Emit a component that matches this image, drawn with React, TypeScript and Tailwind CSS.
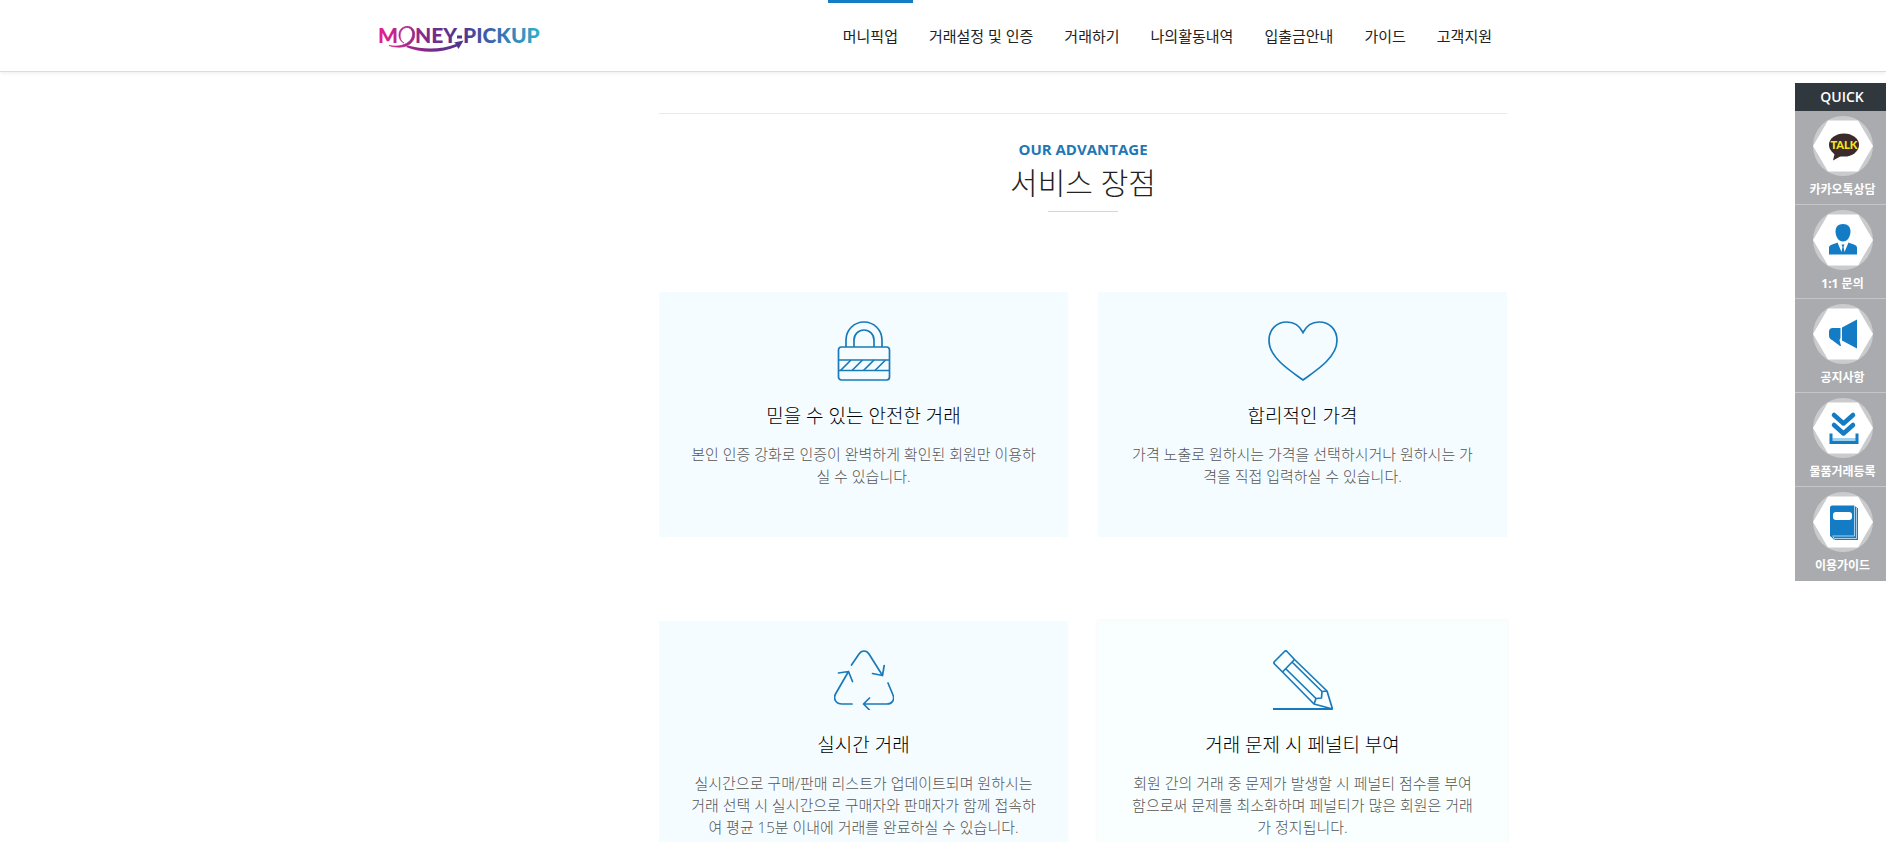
import type { ReactNode } from 'react'

const navItems = ['머니픽업', '거래설정 및 인증', '거래하기', '나의활동내역', '입출금안내', '가이드', '고객지원']

function LockIcon() {
  return (
    <svg viewBox="0 0 60 60" className="h-[60px] w-[60px]" fill="none" stroke="currentColor" strokeWidth="1.7">
      <rect x="4.5" y="26" width="51" height="33" rx="3" />
      <path d="M12 26v-7a18 18 0 0 1 36 0v7M20 26v-7a10 10 0 0 1 20 0v7M4.5 39h51M4.5 49.5h51" />
      <path d="M6.5 49.5L17 39M18 49.5L28.500 39M29.5 49.5L40 39M41 49.5L51.5 39" />
    </svg>
  )
}

function HeartIcon() {
  return (
    <svg viewBox="0 0 70 60" className="h-[60px] w-[70px]" fill="none" stroke="currentColor" strokeWidth="1.7">
      <path d="M35 11.5C31.5 4.500 25.5 1 19 1 8.5 1 1 8.5 1 19.5c0 8.500 4 14.500 11 21.500 6.500 6.500 14 11.500 23 18 9-6.500 16.500-11.500 23-18 7-7 11-13 11-21.500C69 8.500 61.500 1 51 1c-6.500 0-12.500 3.500-16 10.500z" />
    </svg>
  )
}

function RecycleIcon() {
  return (
    <svg viewBox="0 0 60 60" className="h-[60px] w-[60px]" fill="none" stroke="currentColor" strokeWidth="1.7" strokeLinecap="round" strokeLinejoin="round">
      <path d="M17.5 15L25 4c2.500-4 7.500-4 10 0l13.500 21.500M38.500 23.500l10 2 1.700-10" />
      <path d="M54 33l5 12c2 4.500-1 9-6 9H29.500M35.500 48l-6 6 6 6" />
      <path d="M18 54H8c-6 0-9-5-6.500-10L14.500 21.500M4.500 23l10-1.500 4 10" />
    </svg>
  )
}

function PencilIcon() {
  return (
    <svg viewBox="0 0 60 60" className="h-[60px] w-[60px]" fill="none" stroke="currentColor" strokeWidth="1.7" strokeLinejoin="round">
      <path d="M11.5 1.500L1.500 11.500c-.8.8-.8 1.700 0 2.500L9.500 22 41 54l18.500 5L54 41 21.500 9.500 14 1.500c-.8-.8-1.700-.8-2.500 0z" />
      <path d="M9.5 22l12-12.500M12.500 18.500L43 48.500M19 12l30 29.500M41 54l2-5.500 5.500-.5.500-6.500 5-.5" />
      <path d="M0 59h59.500" strokeWidth="2" />
    </svg>
  )
}

const cards = [
  {
    title: '믿을 수 있는 안전한 거래',
    text: '본인 인증 강화로 인증이 완벽하게 확인된 회원만 이용하실 수 있습니다.',
    icon: <LockIcon />,
  },
  {
    title: '합리적인 가격',
    text: '가격 노출로 원하시는 가격을 선택하시거나 원하시는 가격을 직접 입력하실 수 있습니다.',
    icon: <HeartIcon />,
  },
  {
    title: '실시간 거래',
    text: '실시간으로 구매/판매 리스트가 업데이트되며 원하시는 거래 선택 시 실시간으로 구매자와 판매자가 함께 접속하여 평균 15분 이내에 거래를 완료하실 수 있습니다.',
    icon: <RecycleIcon />,
  },
  {
    title: '거래 문제 시 페널티 부여',
    text: '회원 간의 거래 중 문제가 발생할 시 페널티 점수를 부여함으로써 문제를 최소화하며 페널티가 많은 회원은 거래가 정지됩니다.',
    icon: <PencilIcon />,
    active: true,
  },
]

// Every quick icon is drawn on the same 60px disc with a white hexagon
function QuickDisc({ children }: { children: ReactNode }) {
  return (
    <svg viewBox="0 0 60 60" className="h-[60px] w-[60px]">
      <circle cx="30" cy="30" r="30" fill="#cacbcd" />
      <path d="M15 4.500h30L60 30 45 55.500H15L0 30z" fill="#fff" />
      {children}
    </svg>
  )
}

const quickItems = [
  {
    label: '카카오톡상담',
    icon: (
      <>
        <ellipse cx="31" cy="29" rx="15" ry="11.5" fill="#3b2a2b" />
        <path d="M22 36l-2 8.500 9-5z" fill="#3b2a2b" />
        <text x="31" y="33" textAnchor="middle" fontSize="11" fontWeight="900" fontFamily="Lato, sans-serif" fill="#f7e51d">TALK</text>
      </>
    ),
  },
  {
    label: '1:1 문의',
    icon: (
      <g fill="#147cc4">
        <path d="M30 14c-5 0-7.500 3-7.500 7.500 0 5 3 10 7.500 10s7.500-5 7.500-10C37.500 17 35 14 30 14z" />
        <path d="M16 44.500v-7c0-2.500 4-3 8.500-5L28.500 42l1-5-1-2.500h3l-1 2.500 1 5 4-9.500c4.500 2 8.500 2.500 8.500 5v7z" />
      </g>
    ),
  },
  {
    label: '공지사항',
    icon: (
      <g fill="#147cc4">
        <path d="M27.500 24H20c-3 0-4 1.500-4 4v3c0 3 1 4 3 5l8 6h1l-1.500-6 1-2z" />
        <path d="M29 23.500L44 15.500v29L29 36.500z" />
      </g>
    ),
  },
  {
    label: '물품거래등록',
    icon: (
      <g fill="none" stroke="#147cc4">
        <path d="M21 17l9.500 8.500L40 17M21 27l9.500 8.500L40 27" strokeWidth="4.5" strokeLinecap="round" strokeLinejoin="round" />
        <path d="M18 41.500h26" stroke="#9fd3ec" strokeWidth="3" />
        <path d="M18 35.500v9h26v-9" strokeWidth="3" />
      </g>
    ),
  },
  {
    label: '이용가이드',
    icon: (
      <>
        <path d="M19 13.500h22l4 3V48H21l-4-4V15.500c0-1 1-2 2-2z" fill="#147cc4" />
        <path d="M17.500 44.500l3 3h1l-1.500-3M41.500 14v30h-22M43.500 16v30.500h-22" fill="none" stroke="#cfe7f5" strokeWidth=".8" />
        <rect x="20" y="20" width="19" height="8" rx="3" fill="#fff" />
      </>
    ),
  },
]

function Logo() {
  return (
    <svg viewBox="0 0 164 48" className="h-12 w-[164px]" role="img" aria-label="MONEY-PICKUP">
      <defs>
        <linearGradient id="brand" gradientUnits="userSpaceOnUse" x1="0" y1="0" x2="164" y2="0">
          <stop offset="0" stopColor="#e5218c" />
          <stop offset=".3" stopColor="#7d2a88" />
          <stop offset=".5" stopColor="#4f3590" />
          <stop offset=".72" stopColor="#3a6cb0" />
          <stop offset="1" stopColor="#2fb5c9" />
        </linearGradient>
      </defs>
      <g fill="url(#brand)" fontFamily="Lato, sans-serif" fontSize="21" fontWeight="900">
        <text x="-1" y="31">M</text>
        <text x="36" y="31">NEY</text>
        <text x="84" y="31">PICKUP</text>
        <rect x="78" y="23.5" width="5" height="3" />
      </g>
      <path d="M25 31c-7-3-7-15 2-16.500 8-1.500 11 8 7 14-4 6.500-13 8.500-24 5 9 1.500 17 0 21.500-5.500 4-5 2-13-4-12.500-8 .8-8 13-2.500 15.500z" fill="url(#brand)" stroke="url(#brand)" strokeWidth=".7" />
      <path d="M29 33.500c16 4.500 34 4 48-1.500l-2-1.500 9.500-2-5 8.500-1.500-2.500C62 41.500 42 41.500 27 35z" fill="url(#brand)" />
    </svg>
  )
}

export default function App() {
  return (
    <div className="min-h-screen overflow-hidden bg-white font-['Open_Sans','Noto_Sans_CJK_KR',sans-serif] text-[#222]">
      <header className="border-b border-[#dcdcdc] shadow-[0_1px_4px_rgba(0,0,0,0.08)]">
        <div className="mx-auto flex h-[71px] max-w-[1128px] items-start justify-between">
          <a href="#" className="pt-3">
            <Logo />
          </a>
          <nav className="flex gap-px">
            {navItems.map((item, i) => (
              <a
                key={item}
                href="#"
                className={`border-t-3 px-[15px] pt-[23px] text-[15px] leading-5 ${i === 0 ? 'border-[#147cc4]' : 'border-transparent'}`}
              >
                {item}
              </a>
            ))}
          </nav>
        </div>
      </header>

      <main className="mx-auto flex max-w-[1128px] justify-end pt-[41px]">
        <section className="w-full max-w-[848px] border-t border-[#e9e9e9] pt-[23px]">
          <div className="flex flex-col items-center">
            <p className="text-[15px] leading-6 font-bold text-[#1f77b4]">OUR ADVANTAGE</p>
            <h2 className="mt-1 text-[30px] leading-9 font-light">서비스 장점</h2>
            <div className="mt-[10px] h-px w-[70px] bg-[#d5d5d5]" />
          </div>

          <div className="mt-20 grid grid-cols-2 gap-x-[30px] gap-y-[84px]">
            {cards.map((card) => (
              <article
                key={card.title}
                className={`flex min-h-[245px] flex-col items-center px-[30px] pt-[29px] pb-12 text-center ${card.active ? 'bg-[#f8fffe] shadow-[0_0_3px_2px_rgba(0,0,0,0.02)]' : 'bg-[#f5fcff]'}`}
              >
                <div className="text-[#1a7ab9]">{card.icon}</div>
                <h3 className="mt-[23px] text-[19px] leading-6 font-light text-black">{card.title}</h3>
                <p className="mt-[15px] text-[15px] leading-[22px] font-light text-[#555]">{card.text}</p>
              </article>
            ))}
          </div>
        </section>
      </main>

      <aside className="fixed top-[83px] right-0 w-[91px] bg-[#a9abae] text-white">
        <h2 className="bg-[#30383e] pl-[3px] text-center text-[14px] leading-7 font-semibold">QUICK</h2>
        {quickItems.map((item, i) => (
          <a
            key={item.label}
            href="#"
            className={`flex h-[94px] flex-col items-center pt-[5px] pl-1 ${i < quickItems.length - 1 ? 'border-b border-[#c4c6c8]' : ''}`}
          >
            <QuickDisc>{item.icon}</QuickDisc>
            <span className="mt-[5px] text-[12px] leading-[18px] font-bold whitespace-nowrap">{item.label}</span>
          </a>
        ))}
      </aside>
    </div>
  )
}
